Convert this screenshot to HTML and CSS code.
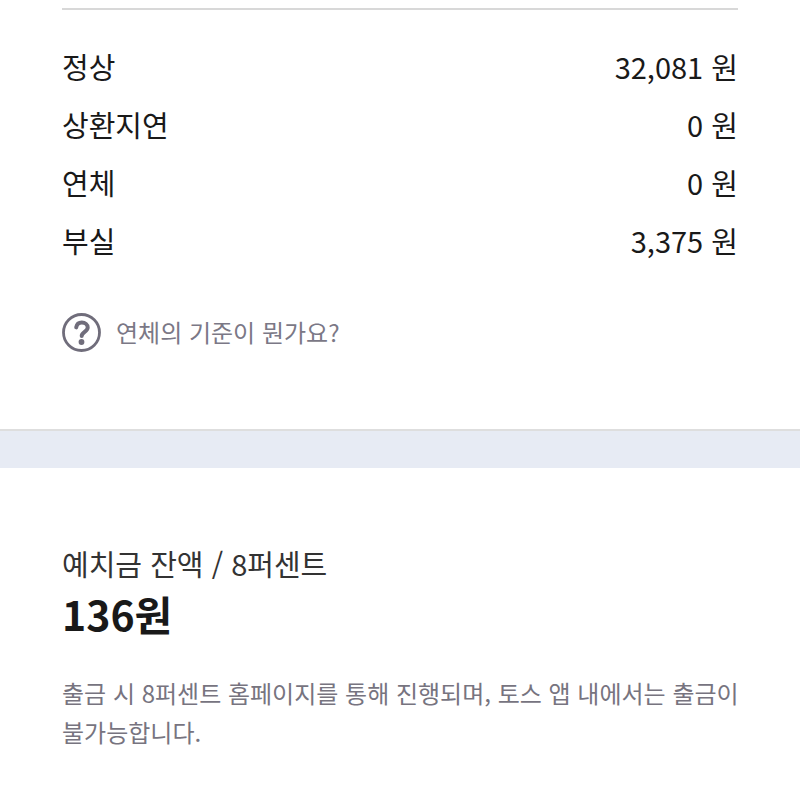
FILE: index.html
```html
<!DOCTYPE html>
<html lang="ko">
<head>
    <meta charset="UTF-8">
    <meta name="viewport" content="width=device-width, initial-scale=1.0">
    <title>8퍼센트</title>
    <link rel="stylesheet" href="styles.css">
</head>
<body>
    <section class="status">
        <dl class="status-list">
            <div class="row">
                <dt>정상</dt>
                <dd>32,081 원</dd>
            </div>
            <div class="row">
                <dt>상환지연</dt>
                <dd>0 원</dd>
            </div>
            <div class="row">
                <dt>연체</dt>
                <dd>0 원</dd>
            </div>
            <div class="row">
                <dt>부실</dt>
                <dd>3,375 원</dd>
            </div>
        </dl>
        <a class="help" href="#">
            <svg class="help-icon" viewBox="0 0 40 40" aria-hidden="true">
                <circle cx="19.5" cy="20.5" r="18" fill="none" stroke="currentColor" stroke-width="2.8"/>
                <path d="M14.2 15.4c.6-3 2.600-4.800 5.600-4.800 3.400 0 5.900 2 5.900 4.900 0 4.200-6 4.500-6 8.500" fill="none" stroke="currentColor" stroke-width="4" stroke-linecap="round"/>
                <circle cx="19.5" cy="30" r="2.900" fill="currentColor"/>
            </svg>
            <span>연체의 기준이 뭔가요?</span>
        </a>
    </section>

    <section class="balance">
        <h2>예치금 잔액 / 8퍼센트</h2>
        <p class="amount">136원</p>
        <p class="note">출금 시 8퍼센트 홈페이지를 통해 진행되며, 토스 앱 내에서는 출금이 불가능합니다.</p>
    </section>
</body>
</html>
```

FILE: styles.css
```css
* {
    box-sizing: border-box;
}

body {
    margin: 0;
    background-color: #fff;
    color: #191919;
    font-family: "Noto Sans CJK KR", sans-serif;
}

.status {
    padding: 8px 62px 77px;
    border-bottom: 2px solid #dedede;
}

.status-list {
    margin: 0;
    padding-top: 27px;
    border-top: 2px solid #d8d8d8;
    font-size: 29px;
    line-height: 58px;
}

.row {
    display: flex;
    justify-content: space-between;
}

.row dd {
    margin: 0;
}

.help {
    display: flex;
    align-items: center;
    gap: 14px;
    margin-top: 43px;
    color: #7b7886;
    font-size: 24px;
    line-height: 40px;
    text-decoration: none;
}

.help-icon {
    width: 40px;
    height: 40px;
    color: #706d7b;
}

.balance {
    padding: 75px 48px 48px 62px;
    border-top: 37px solid #e7ebf4;
}

.balance h2 {
    margin: 0;
    color: #333;
    font-size: 29px;
    font-weight: 400;
    line-height: 40px;
}

.amount {
    margin: 0;
    font-size: 41px;
    font-weight: 700;
    line-height: 60px;
}

.note {
    margin: 30px 0 0;
    color: #77747f;
    font-size: 24px;
    line-height: 39px;
    word-break: keep-all;
}
```
